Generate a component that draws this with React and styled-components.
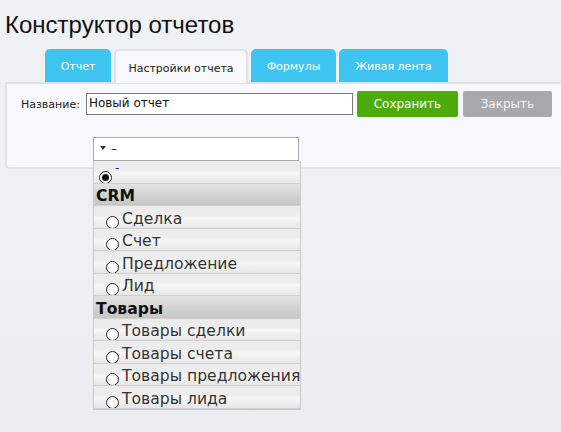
import React from "react";
import styled, { createGlobalStyle } from "styled-components";

const Global = createGlobalStyle`
  html, body { margin: 0; padding: 0; }
  body {
    width: 561px; height: 432px; overflow: hidden;
    background: linear-gradient(180deg, #eff1f4 0%, #eef1f4 60%, #e9edf1 100%);
    font-family: "DejaVu Sans", Verdana, sans-serif;
  }
`;

const Page = styled.div`
  padding-top: 10px;
`;

const Title = styled.h1`
  margin: 0 0 0 5px;
  font-family: "Liberation Sans", Arial, sans-serif;
  font-weight: normal;
  font-size: 24px;
  line-height: 30px;
  color: #111;
`;

const Tabs = styled.div`
  display: flex;
  gap: 3px;
  margin: 9px 0 0 45px;
  height: 33px;
  position: relative;
  z-index: 1;
`;

const Tab = styled.div`
  box-sizing: border-box;
  width: ${(p) => p.$w}px;
  height: ${(p) => (p.$active ? 34 : 33)}px;
  border-radius: 5px 5px 0 0;
  display: flex;
  align-items: center;
  justify-content: center;
  font-size: 11px;
  padding-top: 2px;
  color: ${(p) => (p.$active ? "#222" : "#fff")};
  background: ${(p) => (p.$active ? "#f7f9fc" : "#3ec4f0")};
  border: ${(p) => (p.$active ? "2px solid #dfe2e6" : "none")};
  border-bottom: none;
`;

const Panel = styled.div`
  box-sizing: border-box;
  margin-left: 5px;
  height: 87px;
  background: #f7f9fc;
  border: 2px solid #dfe2e6;
  border-right: none;
  border-radius: 0 0 0 5px;
  position: relative;
  padding: 7px 0 0 14px;
`;

const NameRow = styled.div`
  display: flex;
  align-items: center;
`;

const Label = styled.span`
  font-size: 11px;
  color: #222;
  margin-right: 6px;
  margin-top: 1px;
`;

const NameInput = styled.div`
  box-sizing: border-box;
  width: 267px;
  height: 22px;
  border: 1px solid #7a7a7a;
  background: #fff;
  font-size: 12px;
  color: #111;
  padding: 2px 0 0 2px;
`;

const Button = styled.div`
  box-sizing: border-box;
  height: 26px;
  width: ${(p) => p.$w}px;
  margin-left: ${(p) => p.$ml}px;
  border-radius: 2px;
  background: ${(p) => p.$bg};
  color: ${(p) => p.$fg};
  font-size: 12px;
  display: flex;
  align-items: center;
  justify-content: center;
`;

const SelectWrap = styled.div`
  position: relative;
  margin: 20px 0 0 72px;
  width: 206px;
`;

const Select = styled.div`
  box-sizing: border-box;
  height: 24px;
  background: #fff;
  border: 1px solid #a9a9a9;
  display: flex;
  align-items: center;
  padding-left: 6px;
  font-size: 12px;
  color: #222;
`;

const Arrow = styled.span`
  width: 0;
  height: 0;
  border-left: 3.5px solid transparent;
  border-right: 3.5px solid transparent;
  border-top: 4px solid #333;
  margin-right: 5px;
  margin-top: -2px;
`;

const List = styled.div`
  position: absolute;
  left: 0;
  top: 24px;
  width: 208px;
  box-sizing: border-box;
  border: 1px solid #c9c9c9;
  border-top: none;
  z-index: 5;
`;

const Row = styled.div`
  box-sizing: border-box;
  height: 22.55px;
  display: flex;
  align-items: flex-end;
  border-bottom: 1px solid #cfcfcf;
  padding-left: ${(p) => (p.$header ? 2 : p.$top ? 5 : 12)}px;
  font-size: 15.6px;
  line-height: 18px;
  color: ${(p) => (p.$header ? "#111" : "#333")};
  font-weight: ${(p) => (p.$header ? "bold" : "normal")};
  background: ${(p) =>
    p.$header
      ? "linear-gradient(180deg, #e2e2e2 0%, #d4d4d4 50%, #c6c6c6 100%)"
      : "linear-gradient(180deg, #ebebeb 0%, #ededed 40%, #f7f7f7 55%, #e6e6e6 100%)"};
  white-space: nowrap;
  overflow: hidden;
`;

const Radio = styled.span`
  box-sizing: border-box;
  width: 13px;
  height: 13px;
  border-radius: 50%;
  border: 1px solid #222;
  background: #fff;
  margin-right: 3px;
  margin-bottom: -1px;
  flex: none;
  display: flex;
  align-items: center;
  justify-content: center;
  &::after {
    content: "";
    display: ${(p) => (p.$checked ? "block" : "none")};
    width: 7px;
    height: 7px;
    border-radius: 50%;
    background: #111;
  }
`;

const Dash = styled.span`
  align-self: flex-start;
  margin-top: 1px;
  font-size: 12px;
  line-height: 12px;
`;

const items = [
  { header: "CRM" },
  { label: "Сделка" },
  { label: "Счет" },
  { label: "Предложение" },
  { label: "Лид" },
  { header: "Товары" },
  { label: "Товары сделки" },
  { label: "Товары счета" },
  { label: "Товары предложения" },
  { label: "Товары лида" },
];

export default function App() {
  return (
    <Page>
      <Global />
      <Title>Конструктор отчетов</Title>
      <Tabs>
        <Tab $w={66}>Отчет</Tab>
        <Tab $w={134} $active>Настройки отчета</Tab>
        <Tab $w={85}>Формулы</Tab>
        <Tab $w={109}>Живая лента</Tab>
      </Tabs>
      <Panel>
        <NameRow>
          <Label>Название:</Label>
          <NameInput>Новый отчет</NameInput>
          <Button $w={101} $ml={4} $bg="#4dab0a" $fg="#fff">Сохранить</Button>
          <Button $w={89} $ml={5} $bg="#a8a9ad" $fg="#f2f2f2">Закрыть</Button>
        </NameRow>
        <SelectWrap>
          <Select>
            <Arrow />–
          </Select>
          <List>
            <Row $top>
              <Radio $checked />
              <Dash>-</Dash>
            </Row>
            {items.map((it, i) =>
              it.header ? (
                <Row key={i} $header>{it.header}</Row>
              ) : (
                <Row key={i}>
                  <Radio />
                  {it.label}
                </Row>
              )
            )}
          </List>
        </SelectWrap>
      </Panel>
    </Page>
  );
}
